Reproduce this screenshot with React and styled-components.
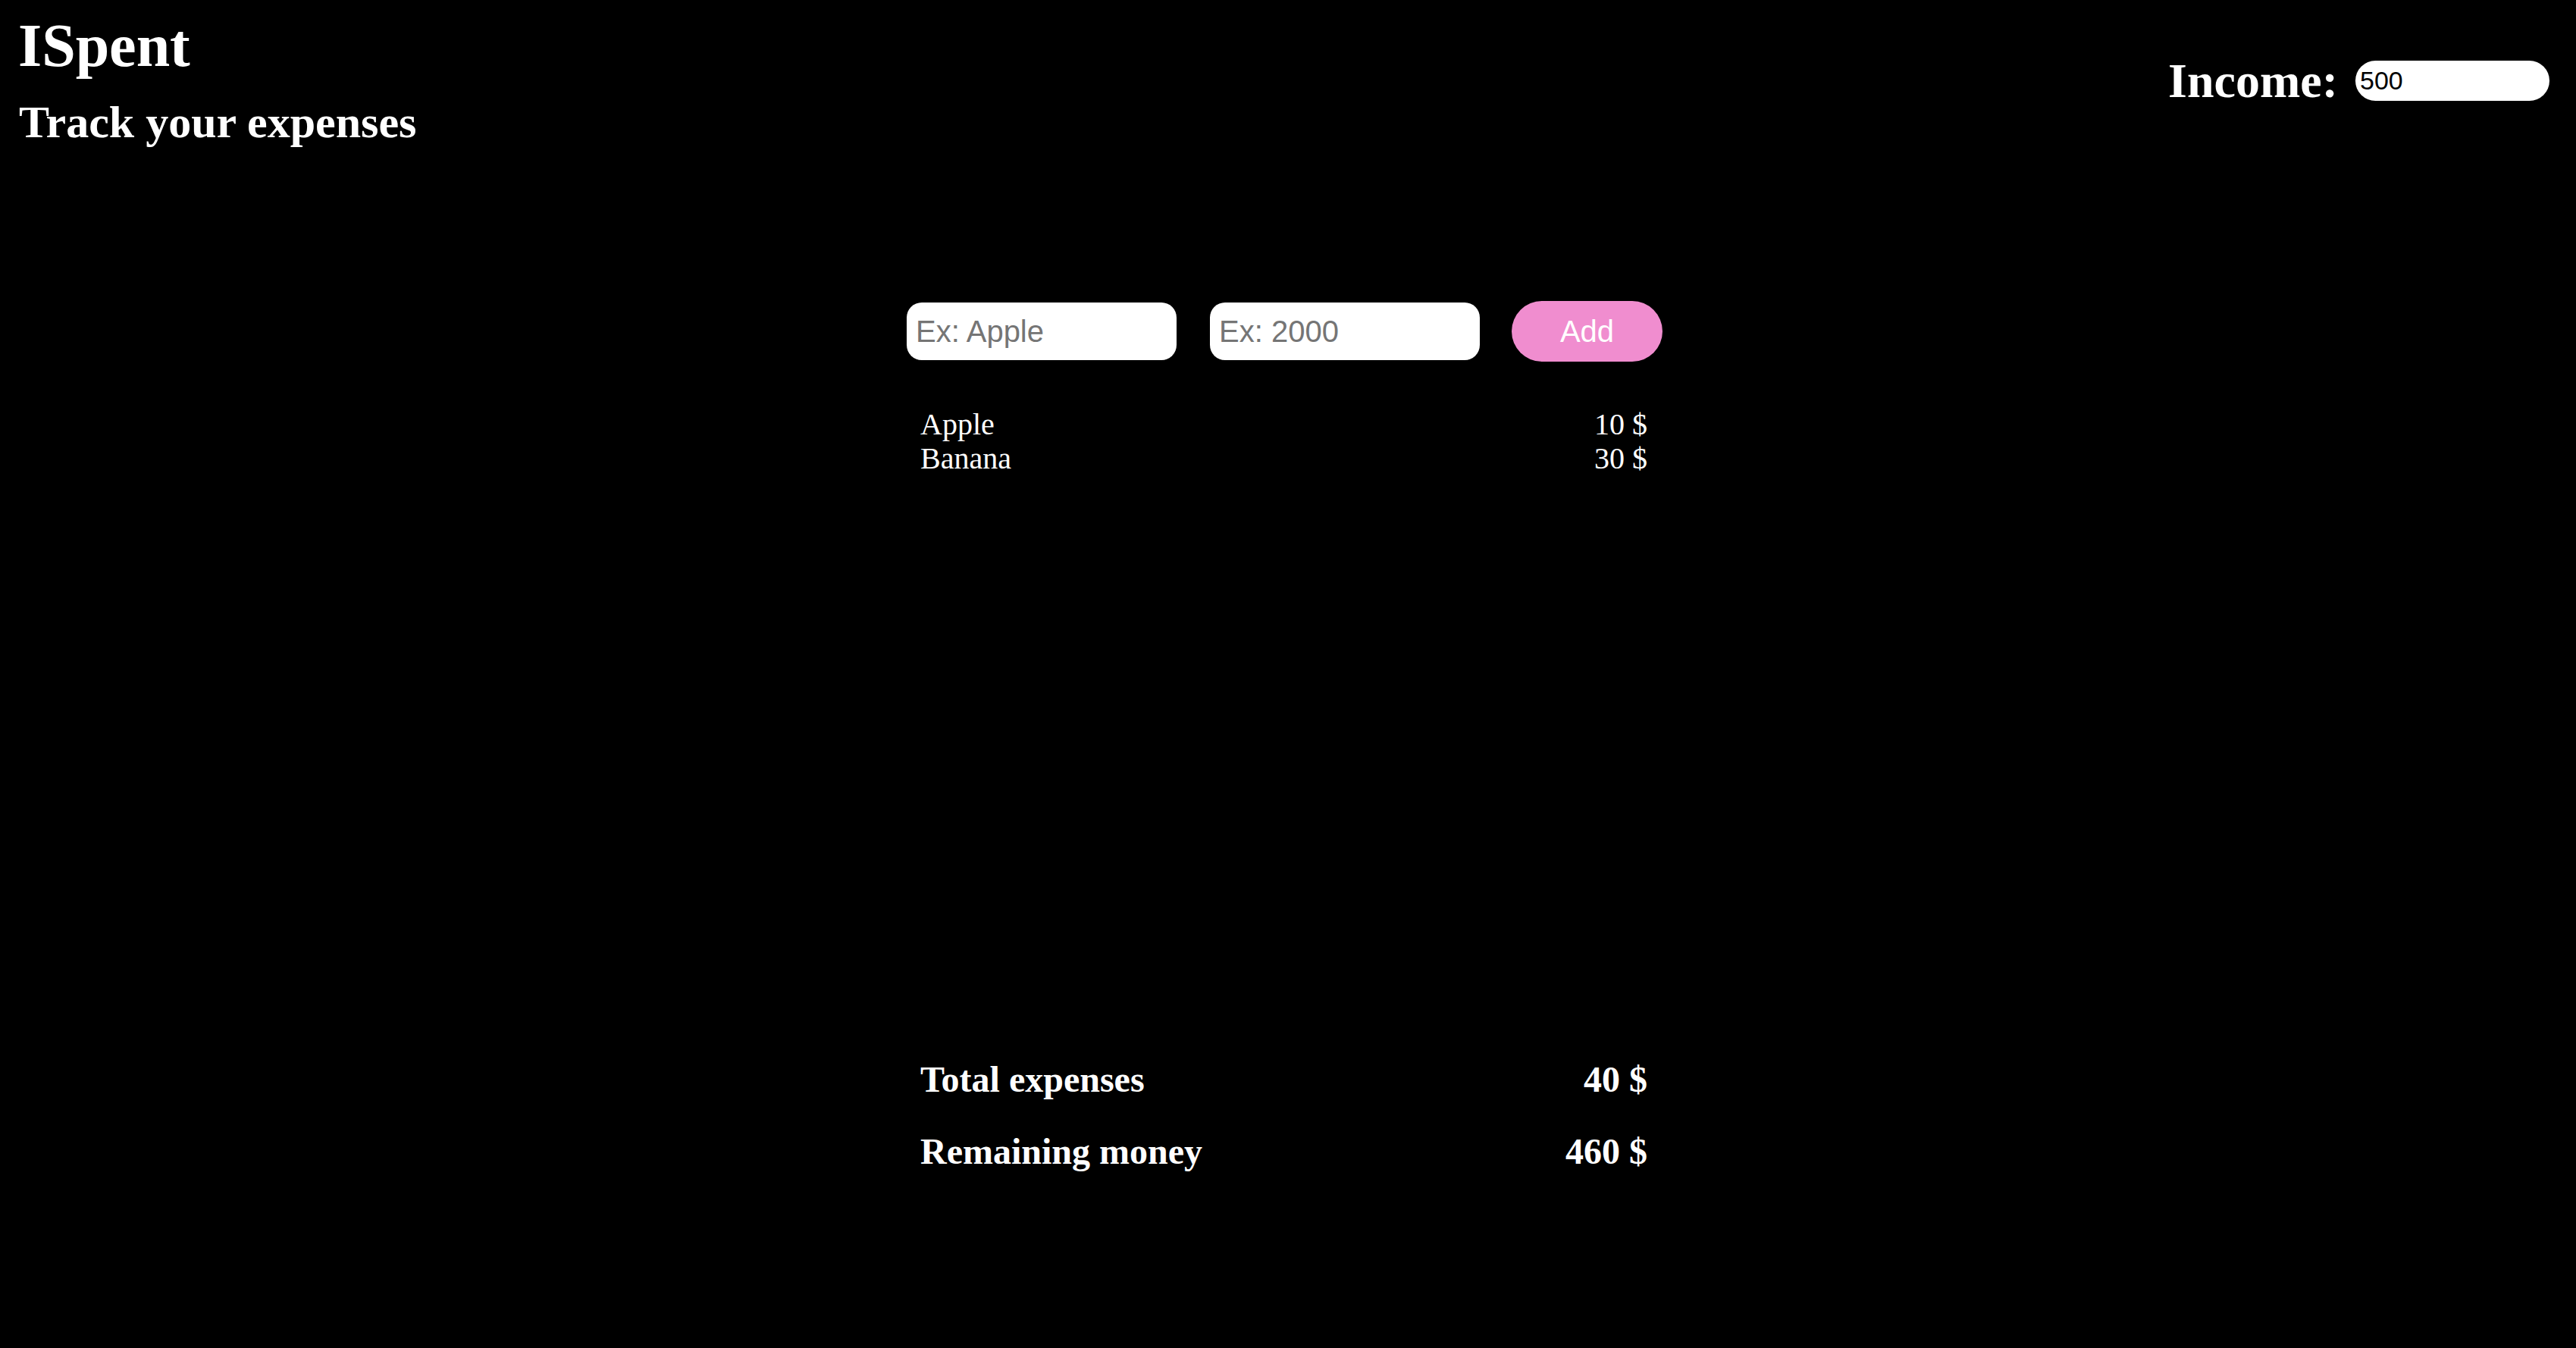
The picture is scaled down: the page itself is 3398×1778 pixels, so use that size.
import React, { useState } from 'react';
import styled, { createGlobalStyle } from 'styled-components';

const expenses = [
  { name: 'Apple', amount: 10 },
  { name: 'Banana', amount: 30 },
];

export default function App() {
  const [income, setIncome] = useState('500');
  const total = expenses.reduce((sum, e) => sum + e.amount, 0);

  return (
    <>
      <GlobalStyle />
      <Page>
        <Header>
          <Brand>
            <Title>ISpent</Title>
            <Subtitle>Track your expenses</Subtitle>
          </Brand>

          <IncomeArea>
            <IncomeLabel>Income:</IncomeLabel>
            <IncomeInput
              type="text"
              value={income}
              onChange={(e) => setIncome(e.target.value)}
            />
          </IncomeArea>
        </Header>

        <Main>
          <Form onSubmit={(e) => e.preventDefault()}>
            <Field type="text" placeholder="Ex: Apple" />
            <Field type="text" placeholder="Ex: 2000" />
            <AddButton type="submit">Add</AddButton>
          </Form>

          <ExpenseList>
            {expenses.map((item) => (
              <ExpenseRow key={item.name}>
                <span>{item.name}</span>
                <span>{item.amount} $</span>
              </ExpenseRow>
            ))}
          </ExpenseList>

          <Summary>
            <SummaryRow>
              <span>Total expenses</span>
              <span>{total} $</span>
            </SummaryRow>
            <SummaryRow>
              <span>Remaining money</span>
              <span>{Number(income) - total} $</span>
            </SummaryRow>
          </Summary>
        </Main>
      </Page>
    </>
  );
}

const GlobalStyle = createGlobalStyle`
  * {
    box-sizing: border-box;
  }

  body {
    margin: 0;
    background: #000;
    color: #fff;
    font-family: "Liberation Serif", "Times New Roman", serif;
  }
`;

const Page = styled.div`
  min-height: 100vh;
  background: #000;
`;

/* header: title on the left, income on the right */
const Header = styled.header`
  display: flex;
  align-items: center;
  justify-content: space-between;
  padding: 15px 35px 0 24px;
`;

const Brand = styled.div`
  display: flex;
  flex-direction: column;
`;

const Title = styled.h1`
  margin: 0;
  font-size: 80px;
  font-weight: 700;
  line-height: 91px;
`;

const Subtitle = styled.h2`
  margin: 22px 0 0 1px;
  font-size: 60px;
  font-weight: 700;
  line-height: 66px;
`;

const IncomeArea = styled.div`
  display: flex;
  align-items: center;
  gap: 23px;
  padding-top: 4px;
`;

const IncomeLabel = styled.span`
  font-size: 64px;
  font-weight: 700;
  line-height: 70px;
`;

const IncomeInput = styled.input`
  width: 256px;
  height: 53px;
  border: none;
  border-radius: 999px;
  padding: 0 6px;
  background: #fff;
  color: #000;
  font-family: "Liberation Sans", Arial, sans-serif;
  font-size: 34px;
  outline: none;
`;

/* main column */
const Main = styled.main`
  width: 1006px;
  margin: 203px auto 0;
  padding-right: 9px;
`;

const Form = styled.form`
  display: flex;
  align-items: center;
`;

const Field = styled.input`
  width: 356px;
  height: 76px;
  margin-right: 44px;
  border: none;
  border-radius: 20px;
  padding: 0 12px;
  background: #fff;
  color: #000;
  font-family: "Liberation Sans", Arial, sans-serif;
  font-size: 40px;
  outline: none;

  &:nth-of-type(2) {
    margin-right: 42px;
  }

  &::placeholder {
    color: #757575;
  }
`;

const AddButton = styled.button`
  width: 199px;
  height: 80px;
  border: none;
  border-radius: 999px;
  background: #f08dcf;
  color: #fff;
  font-family: "Liberation Sans", Arial, sans-serif;
  font-size: 40px;
  cursor: pointer;
`;

const ExpenseList = styled.ul`
  list-style: none;
  margin: 60px 0 0;
  padding: 0 20px 0 18px;
  height: 860px;
`;

const ExpenseRow = styled.li`
  display: flex;
  justify-content: space-between;
  font-size: 40px;
  line-height: 45px;
`;

const Summary = styled.div`
  display: flex;
  flex-direction: column;
  gap: 42px;
  padding: 0 20px 0 18px;
`;

const SummaryRow = styled.div`
  display: flex;
  justify-content: space-between;
  font-size: 48px;
  font-weight: 700;
  line-height: 53px;
`;
